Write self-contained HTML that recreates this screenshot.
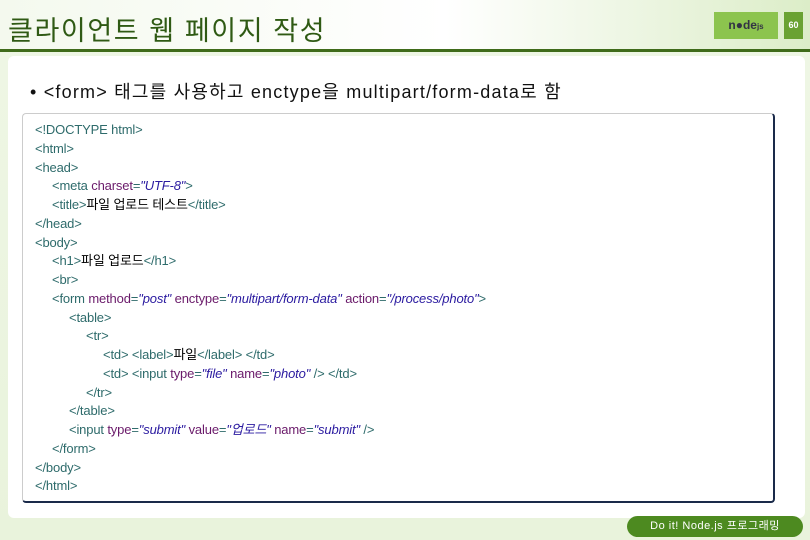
<!DOCTYPE html>
<html><head><meta charset="utf-8"><style>
body{margin:0;width:810px;height:540px;overflow:hidden;font-family:"Liberation Sans","Noto Sans CJK KR",sans-serif;
background:linear-gradient(180deg,#d6ebbf 0%,#eef6e4 10%,#e9f3dc 100%);position:relative}
.hdr{position:absolute;left:0;top:0;width:810px;height:50px;background:linear-gradient(90deg,#f4f9ee 0%,#ffffff 55%,#dcedc8 100%)}
.title{position:absolute;left:8px;top:9px;font-size:27px;color:#2f5a14;letter-spacing:1.6px}
.line{position:absolute;left:0;top:49px;width:810px;height:3px;background:#3f6b1a}
.panel{position:absolute;left:8px;top:56px;width:797px;height:462px;background:#fff;border-radius:6px}
.logo{position:absolute;left:714px;top:12px;width:64px;height:27px;background:#8cc44e;color:#334;font-size:12px;font-weight:bold;text-align:center;line-height:27px}
.pg{position:absolute;left:784px;top:12px;width:19px;height:27px;background:#6aa232;color:#fff;font-size:9px;font-weight:bold;text-align:center;line-height:27px}
.bullet{position:absolute;left:30px;top:78px;font-size:18px;color:#111;letter-spacing:1.2px;white-space:nowrap}
.code{position:absolute;left:22px;top:113px;width:750px;height:387px;border:1px solid #ccc;border-right:2px solid #1a2a4a;border-bottom:2px solid #1a2a4a;border-radius:4px;background:#fff}
.c{position:absolute;left:12px;top:7px;font-size:13px;line-height:18.75px;color:#2e6b6b;white-space:nowrap;letter-spacing:-0.15px}
.c div{height:18.75px}
.i1{padding-left:17px}.i2{padding-left:34px}.i3{padding-left:51px}.i4{padding-left:68px}
.a{color:#6a1a6a}.v{color:#2a1aa0;font-style:italic}.k{color:#000}
.foot{position:absolute;left:627px;top:516px;width:176px;height:21px;border-radius:11px;background:#4d8a20;color:#fff;font-size:11px;text-align:center;line-height:21px;letter-spacing:0.5px}
</style></head><body>
<div class="hdr"></div>
<div class="title">클라이언트 웹 페이지 작성</div>
<div class="logo">n●de<span style="font-size:8px">js</span></div>
<div class="pg">60</div>
<div class="line"></div>
<div class="panel"></div>
<div class="bullet">• &lt;form&gt; 태그를 사용하고 enctype을 multipart/form-data로 함</div>
<div class="code"><div class="c"><div>&lt;!DOCTYPE html&gt;</div><div>&lt;html&gt;</div><div>&lt;head&gt;</div><div class="i1">&lt;meta <span class="a">charset</span>=<span class="v">"UTF-8"</span>&gt;</div><div class="i1">&lt;title&gt;<span class="k">파일 업로드 테스트</span>&lt;/title&gt;</div><div>&lt;/head&gt;</div><div>&lt;body&gt;</div><div class="i1">&lt;h1&gt;<span class="k">파일 업로드</span>&lt;/h1&gt;</div><div class="i1">&lt;br&gt;</div><div class="i1">&lt;form <span class="a">method</span>=<span class="v">"post"</span> <span class="a">enctype</span>=<span class="v">"multipart/form-data"</span> <span class="a">action</span>=<span class="v">"/process/photo"</span>&gt;</div><div class="i2">&lt;table&gt;</div><div class="i3">&lt;tr&gt;</div><div class="i4">&lt;td&gt; &lt;label&gt;<span class="k">파일</span>&lt;/label&gt; &lt;/td&gt;</div><div class="i4">&lt;td&gt; &lt;input <span class="a">type</span>=<span class="v">"file"</span> <span class="a">name</span>=<span class="v">"photo"</span> /&gt; &lt;/td&gt;</div><div class="i3">&lt;/tr&gt;</div><div class="i2">&lt;/table&gt;</div><div class="i2">&lt;input <span class="a">type</span>=<span class="v">"submit"</span> <span class="a">value</span>=<span class="v">"업로드"</span> <span class="a">name</span>=<span class="v">"submit"</span> /&gt;</div><div class="i1">&lt;/form&gt;</div><div>&lt;/body&gt;</div><div>&lt;/html&gt;</div></div></div>
<div class="foot">Do it! Node.js 프로그래밍</div>
</body></html>
